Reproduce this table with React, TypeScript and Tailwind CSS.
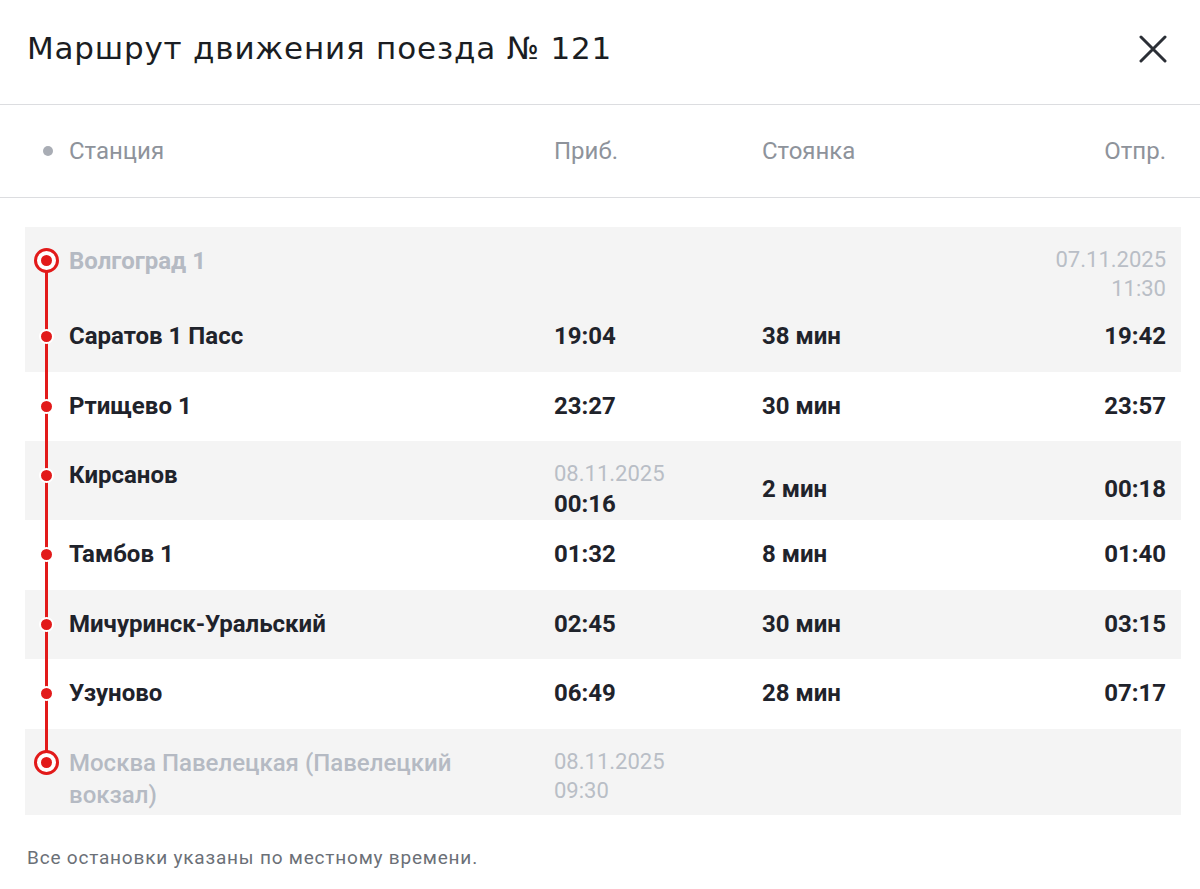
import React from 'react';

interface Stop {
  name: string;
  arrDate?: string;
  arr?: string;
  stay?: string;
  depDate?: string;
  dep?: string;
  terminal?: boolean;
  gray: boolean;
  height: string;
}

const stops: Stop[] = [
  { name: 'Волгоград 1', depDate: '07.11.2025', dep: '11:30', terminal: true, gray: true, height: 'h-[75px]' },
  { name: 'Саратов 1 Пасс', arr: '19:04', stay: '38 мин', dep: '19:42', gray: true, height: 'h-[70px]' },
  { name: 'Ртищево 1', arr: '23:27', stay: '30 мин', dep: '23:57', gray: false, height: 'h-[69px]' },
  { name: 'Кирсанов', arrDate: '08.11.2025', arr: '00:16', stay: '2 мин', dep: '00:18', gray: true, height: 'h-[79px]' },
  { name: 'Тамбов 1', arr: '01:32', stay: '8 мин', dep: '01:40', gray: false, height: 'h-[70px]' },
  { name: 'Мичуринск-Уральский', arr: '02:45', stay: '30 мин', dep: '03:15', gray: true, height: 'h-[69px]' },
  { name: 'Узуново', arr: '06:49', stay: '28 мин', dep: '07:17', gray: false, height: 'h-[70px]' },
  { name: 'Москва Павелецкая (Павелецкий вокзал)', arrDate: '08.11.2025', arr: '09:30', terminal: true, gray: true, height: 'h-[86px]' },
];

const Marker = ({ terminal, first, last }: { terminal?: boolean; first: boolean; last: boolean }) => (
  <div className="relative">
    {!first && <div className="absolute left-[20px] top-0 h-[34px] w-[3px] bg-[#e21a1a]" />}
    {!last && <div className="absolute left-[20px] top-[34px] bottom-0 w-[3px] bg-[#e21a1a]" />}
    {terminal ? (
      <div className="absolute left-[9px] top-[21px] flex h-[25px] w-[25px] items-center justify-center rounded-full border-[3px] border-[#e21a1a] bg-white">
        <div className="h-[11px] w-[11px] rounded-full bg-[#e21a1a]" />
      </div>
    ) : (
      <div className="absolute left-[14px] top-[27px] h-[15px] w-[15px] rounded-full border-2 border-white bg-[#e21a1a]" />
    )}
  </div>
);

export default function App() {
  return (
    <div className="w-[1200px] h-[889px] bg-white font-['Roboto',sans-serif] text-[#1f232b]">
      {/* Header */}
      <div className="flex h-[105px] items-center justify-between border-b border-[#dcdde0] pl-[27px] pr-[33px] pb-[7px]">
        <h2 className="font-['DejaVu_Sans',sans-serif] text-[31px] tracking-[0.8px] text-[#1a1d22]">
          Маршрут движения поезда № 121
        </h2>
        <svg width="28" height="28" viewBox="0 0 28 28" fill="none" stroke="#2b2f36" strokeWidth="3" strokeLinecap="round">
          <path d="M2 2L26 26M26 2L2 26" />
        </svg>
      </div>

      {/* Column heads */}
      <div className="ml-[25px] mr-[19px] grid h-[92px] grid-cols-[44px_485px_208px_1fr_auto] items-center pr-[15px] text-[24px] text-[#8e939b]">
        <div className="flex justify-center pl-[2px]">
          <div className="h-[10px] w-[10px] rounded-full bg-[#a9adb5]" />
        </div>
        <div>Станция</div>
        <div>Приб.</div>
        <div>Стоянка</div>
        <div className="text-right">Отпр.</div>
      </div>
      <div className="h-px bg-[#dcdde0]" />

      {/* Route */}
      <div className="ml-[25px] mr-[19px] mt-[29px]">
        {stops.map((s, i) => {
          const shifted = !!s.arrDate && !s.terminal;
          return (
            <div
              key={s.name}
              className={`grid grid-cols-[44px_485px_208px_1fr_auto] pr-[15px] ${s.height} ${s.gray ? 'bg-[#f4f4f4]' : 'bg-white'}`}
            >
              <Marker terminal={s.terminal} first={i === 0} last={i === stops.length - 1} />
              <div
                className={`pt-[18px] pr-[70px] text-[24px] leading-[32px] ${
                  s.terminal
                    ? i === 0
                      ? 'font-bold text-[#b5bac3]'
                      : 'font-medium text-[#b5bac3]'
                    : 'font-bold text-[#1f232b]'
                }`}
              >
                {s.name}
              </div>
              <div className="pt-[18px]">
                {s.arrDate && <div className="text-[22px] leading-[29px] text-[#b9bec6]">{s.arrDate}</div>}
                {s.arr && (
                  <div
                    className={
                      s.terminal ? 'text-[22px] leading-[29px] text-[#b9bec6]' : 'text-[24px] leading-[32px] font-bold'
                    }
                  >
                    {s.arr}
                  </div>
                )}
              </div>
              <div className={shifted ? 'pt-[32px]' : 'pt-[18px]'}>
                {s.stay && <span className="text-[24px] leading-[32px] font-bold">{s.stay}</span>}
              </div>
              <div className={`flex flex-col items-end ${shifted ? 'pt-[32px]' : 'pt-[18px]'}`}>
                {s.depDate && <div className="text-[22px] leading-[29px] text-[#b9bec6]">{s.depDate}</div>}
                {s.dep && (
                  <div
                    className={
                      s.terminal ? 'text-[22px] leading-[29px] text-[#b9bec6]' : 'text-[24px] leading-[32px] font-bold'
                    }
                  >
                    {s.dep}
                  </div>
                )}
              </div>
            </div>
          );
        })}
      </div>

      {/* Footer */}
      <p className="mt-[31px] pl-[27px] text-[19px] leading-[24px] tracking-[0.8px] text-[#6b7077]">
        Все остановки указаны по местному времени.
      </p>
    </div>
  );
}
